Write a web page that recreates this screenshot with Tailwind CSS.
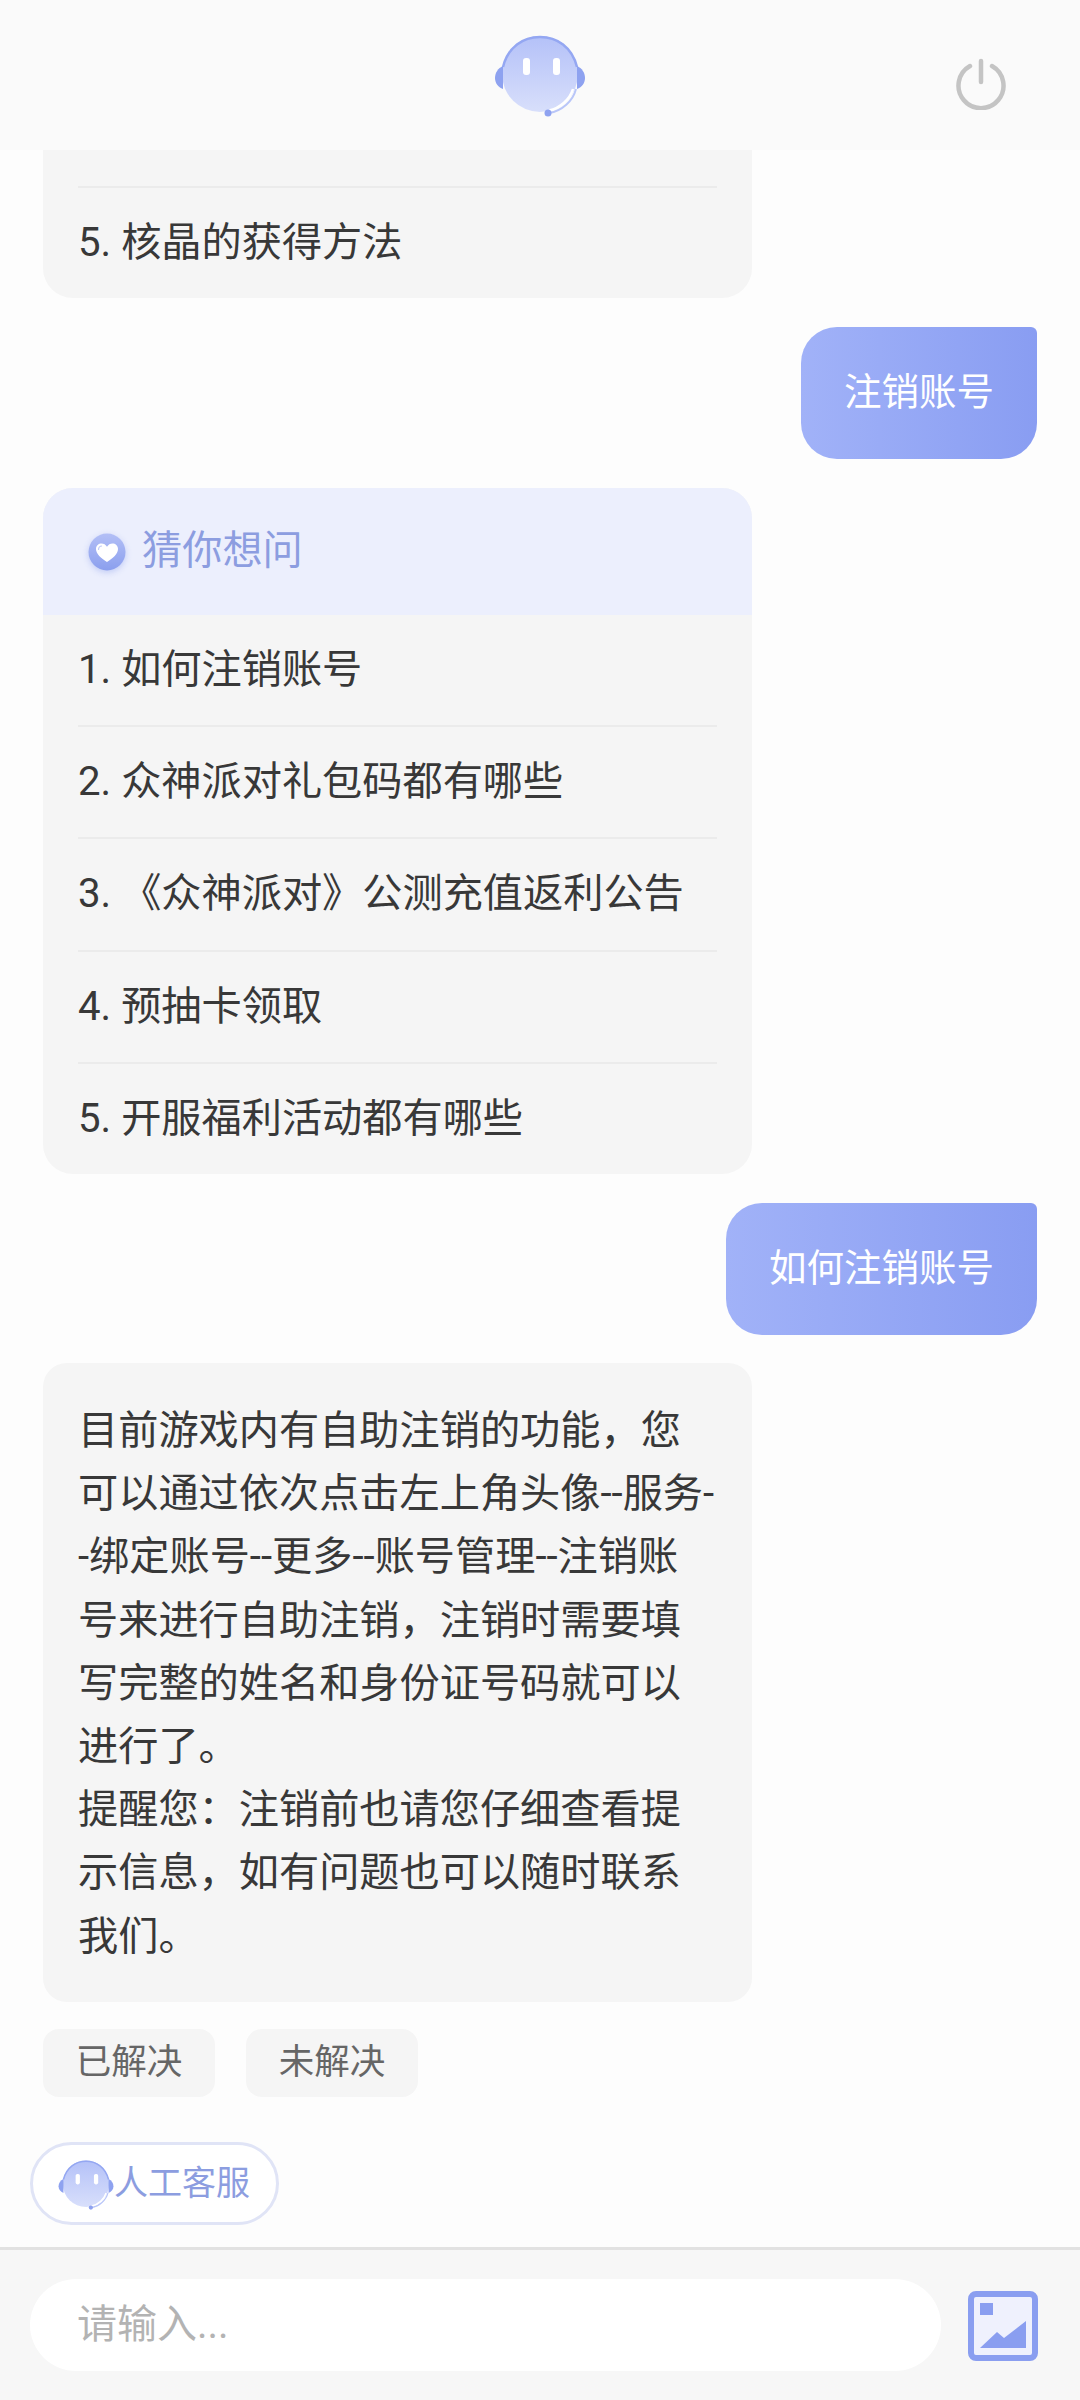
<!DOCTYPE html>
<html lang="zh-CN">
<head>
    <meta charset="UTF-8">
    <meta name="viewport" content="width=device-width, initial-scale=1.0">
    <title>智能客服</title>
    <script src="https://cdn.jsdelivr.net/npm/@tailwindcss/browser@4"></script>
</head>
<body class="bg-[#fdfdfd]">
    <div class="w-[1080px] h-[2400px] flex flex-col overflow-hidden font-['Roboto','Noto_Sans_CJK_SC',sans-serif] text-[#383838]">

        <!-- Header -->
        <svg width="0" height="0" class="absolute">
            <defs>
                <linearGradient id="head" x1="0" y1="0" x2="0" y2="1">
                    <stop offset="0" stop-color="#b4c1f8"/>
                    <stop offset="1" stop-color="#d8dffb"/>
                </linearGradient>
                <linearGradient id="badge" x1="0" y1="0" x2="0" y2="1">
                    <stop offset="0" stop-color="#b3bff6"/>
                    <stop offset="1" stop-color="#8b9fee"/>
                </linearGradient>
                <symbol id="avatar" viewBox="0 0 90 82">
                    <circle cx="45" cy="39" r="38" fill="url(#head)"/>
                    <path d="M8 32C13 12 28 2 45 2C62 2 77 12 82 32" fill="none" stroke="#94a7f2" stroke-width="2.5"/>
                    <path d="M8 31C3 33 0 38 0 43C0 48 3 52 8 54Z" fill="#8ea2f0"/>
                    <path d="M82 31C87 33 90 38 90 43C90 48 87 52 82 54Z" fill="#8ea2f0"/>
                    <rect x="28" y="23" width="7" height="17" rx="3" fill="#fff"/>
                    <rect x="58" y="23" width="7" height="17" rx="3" fill="#fff"/>
                    <path d="M81 54C78 66 67 76 54 78" fill="none" stroke="#b9c6f8" stroke-width="2"/>
                    <path d="M78 54C75 64 65 73 54 75.5" fill="none" stroke="#fff" stroke-width="2.5"/>
                    <circle cx="53" cy="78" r="3.5" fill="#8ea2f0"/>
                </symbol>
            </defs>
        </svg>
        <header class="h-[150px] shrink-0 bg-[#fafafa] relative flex items-center justify-center">
            <svg class="w-[90px] h-[82px] mt-[2px] blur-[0.6px]"><use href="#avatar"/></svg>
            <svg class="absolute left-[955px] top-[58px] blur-[0.5px]" width="52" height="52" viewBox="0 0 52 52" fill="none" stroke="#c4c4c4" stroke-width="4.5" stroke-linecap="round">
                <path d="M15 8A22.5 22.5 0 1 0 37 8"/>
                <path d="M26 3V24"/>
            </svg>
        </header>

        <!-- Messages -->
        <main class="flex-1 flex flex-col px-[43px] overflow-hidden">
            <div class="w-[709px] h-[148px] shrink-0 bg-[#f5f5f5] rounded-b-[30px] px-[35px] pt-[37px]">
                <div class="h-[110px] border-t-2 border-[#ebebeb] flex items-center text-[40.2px] leading-[63px] -mt-[1px]">5. 核晶的获得方法</div>
            </div>

            <div class="self-end mt-[29px] h-[132px] px-[43px] pb-[2px] flex items-center rounded-[36px] rounded-tr-[6px] bg-gradient-to-r from-[#a1b2f8] to-[#899df2] text-white text-[37.5px]">注销账号</div>

            <div class="w-[709px] shrink-0 mt-[29px] bg-[#f5f5f5] rounded-[30px] overflow-hidden text-[40.2px]">
                <div class="h-[127px] bg-[#eceffd] pl-[45px] flex items-center gap-[16px] text-[#8c9de0]">
                    <svg width="38" height="38" viewBox="0 0 38 38" class="shrink-0 mt-[1px] drop-shadow-[0_2px_3px_rgba(139,159,238,0.45)]">
                        <circle cx="19" cy="19" r="18.5" fill="url(#badge)"/>
                        <path d="M19 29C13 25 8 21 8 16C8 12.5 10.7 10.5 13.5 10.5C15.8 10.5 17.8 11.7 19 13.8C20.2 11.7 22.2 10.5 24.5 10.5C27.3 10.5 30 12.5 30 16C30 21 25 25 19 29Z" fill="#fff"/>
                        <path d="M10.5 17C10.5 14.5 12 13 14 13" fill="none" stroke="#c3cdf8" stroke-width="1.2"/>
                    </svg>
                    <span>猜你想问</span>
                </div>
                <div class="px-[35px]">
                    <div class="h-[110px] flex items-center">1. 如何注销账号</div>
                    <div class="h-[112px] border-t-2 border-[#ebebeb] flex items-center">2. 众神派对礼包码都有哪些</div>
                    <div class="h-[113px] border-t-2 border-[#ebebeb] flex items-center">3. 《众神派对》公测充值返利公告</div>
                    <div class="h-[112px] border-t-2 border-[#ebebeb] flex items-center">4. 预抽卡领取</div>
                    <div class="h-[112px] border-t-2 border-[#ebebeb] flex items-center">5. 开服福利活动都有哪些</div>
                </div>
            </div>

            <div class="self-end mt-[29px] h-[132px] px-[43px] pb-[2px] flex items-center rounded-[36px] rounded-tr-[6px] bg-gradient-to-r from-[#a1b2f8] to-[#899df2] text-white text-[37.5px]">如何注销账号</div>

            <div class="w-[709px] shrink-0 mt-[28px] bg-[#f5f5f5] rounded-[24px] pl-[35px] pr-[36px] pt-[36px] pb-[34px] text-[40.2px] leading-[63.2px]">
                目前游戏内有自助注销的功能，您可以通过依次点击左上角头像--服务--绑定账号--更多--账号管理--注销账号来进行自助注销，注销时需要填写完整的姓名和身份证号码就可以进行了。<br>提醒您：注销前也请您仔细查看提示信息，如有问题也可以随时联系我们。
            </div>

            <div class="flex gap-[31px] mt-[27px]">
                <button class="w-[172px] h-[68px] rounded-[16px] bg-[#f5f5f5] text-[#666] text-[35.5px] flex items-center justify-center">已解决</button>
                <button class="w-[172px] h-[68px] rounded-[16px] bg-[#f5f5f5] text-[#666] text-[35.5px] flex items-center justify-center">未解决</button>
            </div>

            <div class="-ml-[13px] mt-[45px] w-[249px] h-[83px] rounded-full border-[3px] border-[#e0e4f6] bg-white flex items-center pl-[25px] text-[#8c9de0] text-[34px]">
                <svg class="w-[56px] h-[50px] shrink-0 mt-[4px]"><use href="#avatar"/></svg>
                <span>人工客服</span>
            </div>
        </main>

        <!-- Input bar -->
        <footer class="h-[153px] shrink-0 bg-[#f7f7f7] border-t-[3px] border-[#e2e2e2] flex items-center pl-[30px] pr-[42px] justify-between">
            <div class="w-[911px] h-[92px] rounded-full bg-white flex items-center pl-[47px] text-[40px] text-[#b3b3b3]">请输入...</div>
            <svg width="70" height="70" viewBox="0 0 70 70" class="mt-[2px]">
                <rect x="3" y="3" width="64" height="64" rx="5" fill="#eff1fd" stroke="#8a9ef0" stroke-width="6"/>
                <rect x="12" y="12" width="13" height="12" fill="#8a9ef0"/>
                <path d="M12 57L29 41L36 47L58 30V57Z" fill="#8a9ef0"/>
            </svg>
        </footer>
    </div>
</body>
</html>
